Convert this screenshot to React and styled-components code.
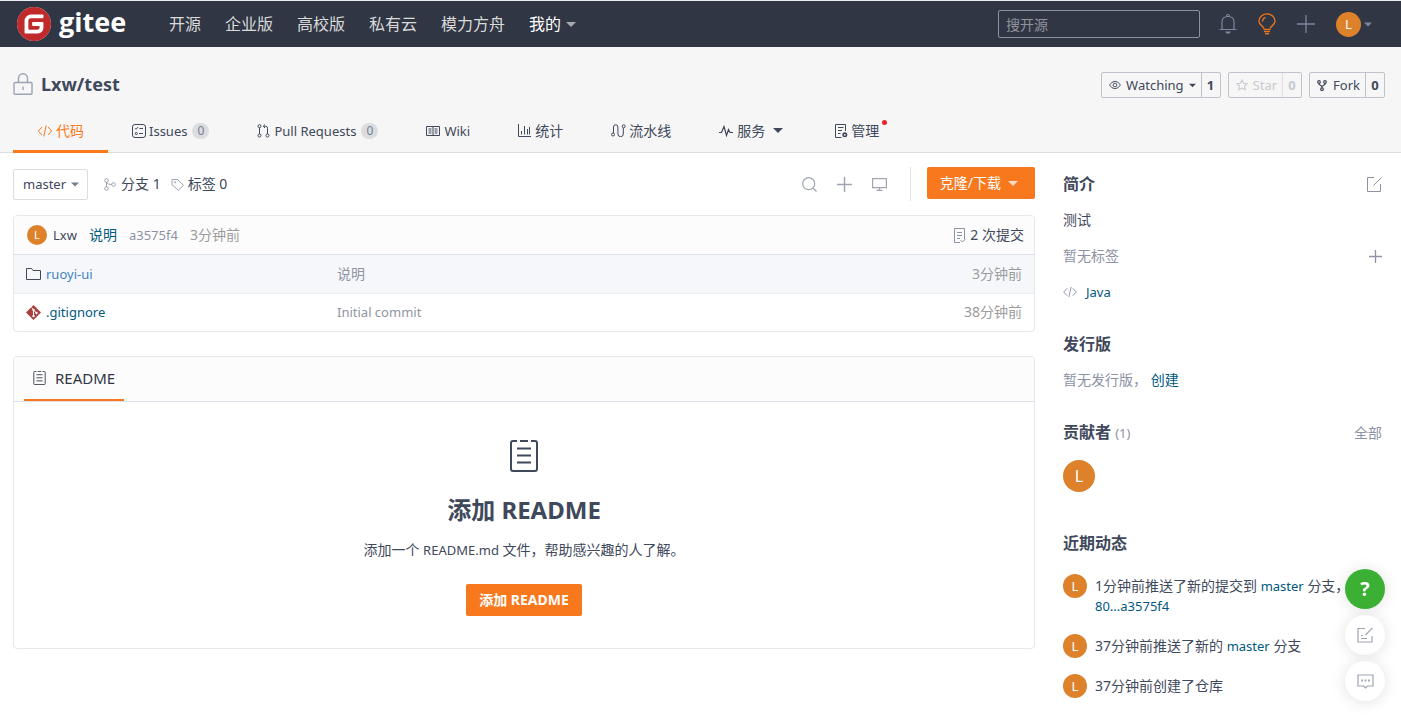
import React from 'react'
import styled, { createGlobalStyle } from 'styled-components'
import { SiGitee } from 'react-icons/si'

const GlobalStyle = createGlobalStyle`
  * {
    box-sizing: border-box;
  }

  body {
    margin: 0;
    background: #fff;
    color: #40485b;
    font-family: "Noto Sans", "Noto Sans CJK SC", sans-serif;
    font-size: 14px;
    line-height: 20px;
  }

  a {
    color: inherit;
    text-decoration: none;
  }

  button {
    padding: 0;
    border: 0;
    background: none;
    color: inherit;
    font: inherit;
    cursor: pointer;
  }

  h1, h2, h3, p, ul {
    margin: 0;
    padding: 0;
  }

  ul {
    list-style: none;
  }
`

/* ---------- icons ---------- */

const Svg = styled.svg`
  display: block;
  flex: none;
  fill: none;
  stroke: currentColor;
`

const Icon = ({ w = 14, h = w, box = `0 0 ${w} ${h}`, stroke = 1, children }) => (
  <Svg width={w} height={h} viewBox={box} strokeWidth={stroke} aria-hidden="true">
    {children}
  </Svg>
)

const Caret = ({ w = 10 }) => (
  <Icon w={w} h={5} box="0 0 10 5" stroke={0}>
    <path d="M0 0h10L5 5z" fill="currentColor" />
  </Icon>
)

const BellIcon = () => (
  <Icon w={18} h={22} stroke={1.2}>
    <path d="M3 16V9q0-5.500 6-5.500T15 9v7M.5 16.500h17M7.500 3.500q0-2 1.500-2t1.500 2" />
    <path d="M6 18.500h6q-1 2.300-3 2.300T6 18.500z" fill="currentColor" stroke="none" />
  </Icon>
)

const BulbIcon = () => (
  <Icon w={18} h={22} stroke={1.4}>
    <path d="M5.800 15.500c0-2.500-4.800-3.100-4.800-7.300a8 7.300 0 0 1 16 0c0 4.200-4.800 4.800-4.800 7.300M4.500 8.500c0-2 1-3.500 3-4.200M5.500 16.500h7M6 18.600h6M7 20.800h4" />
  </Icon>
)

const PlusIcon = ({ w = 14, stroke = 1 }) => (
  <Icon w={w} box="0 0 14 14" stroke={stroke}>
    <path d="M7 0v14M0 7h14" />
  </Icon>
)

const LockIcon = () => (
  <Icon w={20} h={22} stroke={1.4}>
    <rect x="1" y="9.500" width="18" height="11.800" rx="1" />
    <path d="M5.500 9.500V5.200a4.500 4.500 0 0 1 9 0v4.300M10 13.500v3.500" />
  </Icon>
)

const CodeIcon = ({ w = 15 }) => (
  <Icon w={w} h={12} box="0 0 15 12">
    <path d="M4.500 2L.8 6l3.700 4M10.500 2l3.700 4-3.700 4M8.700.5l-2.400 11" />
  </Icon>
)

const IssuesIcon = () => (
  <Icon>
    <rect x=".5" y=".5" width="13" height="13" rx="2.500" />
    <path d="M3 4.200l1 1L6.200 3M7.500 4.500H11M7 9.500h4" />
    <circle cx="4.300" cy="9.500" r="1.100" />
  </Icon>
)

const PullIcon = () => (
  <Icon w={14}>
    <circle cx="2.500" cy="2.200" r="1.500" />
    <circle cx="2.500" cy="11.500" r="1.500" />
    <circle cx="10.500" cy="11.500" r="1.500" />
    <path d="M2.500 3.700V10M10.500 10V4.200q0-2-2-2H6.500M8 .5L6.300 2.200 8 4" />
  </Icon>
)

const WikiIcon = () => (
  <Icon w={15} h={12}>
    <path d="M.5 1.500h13v9H.5zM7 1.500v9M2.500 4h3M2.500 6h3M2.500 8h3M8.500 4h3M8.500 6h3M8.500 8h3" />
  </Icon>
)

const StatsIcon = () => (
  <Icon w={14} h={13}>
    <path d="M.5 0v12.500H13M3.500 10.500V7M6.500 10.500V2M9.500 10.500V5M11.500 10.500V3" />
  </Icon>
)

const PipelineIcon = () => (
  <Icon w={15} h={13}>
    <circle cx="2" cy="10.500" r="1.500" />
    <circle cx="12.700" cy="2.300" r="1.500" />
    <path d="M2.500 9V3a2.200 2.200 0 0 1 4.400 0v7a2.700 2.700 0 0 0 5.400 0V4" />
  </Icon>
)

const PulseIcon = () => (
  <Icon w={15} h={12}>
    <path d="M0 7.500h2.500L5 1.500l2.500 9 2-6 1.500 3h3" strokeWidth="1.200" />
  </Icon>
)

const ManageIcon = () => (
  <Icon>
    <path d="M7.500 13.500h-6V.5h10V7M4 3.500h5.500M4 6.500h4M4 9.500h2.500" />
    <circle cx="10.800" cy="10.800" r="1.700" strokeWidth="1.600" />
  </Icon>
)

const EyeIcon = () => (
  <Icon w={12} h={10} box="0 0 13 10">
    <path d="M.6 5Q3 1 6.500 1t5.900 4Q10 9 6.500 9T.6 5z" />
    <circle cx="6.500" cy="5" r="2" />
  </Icon>
)

const StarIcon = () => (
  <Icon w={12} box="0 0 13 13" stroke={1.2}>
    <path d="M6.500 1l1.700 3.600 3.900.5-2.900 2.700.8 3.900-3.500-1.900L3 11.700l.8-3.900L.9 5.100l3.900-.5z" />
  </Icon>
)

const ForkIcon = () => (
  <Icon w={11} stroke={1.2}>
    <circle cx="2" cy="2" r="1.300" />
    <circle cx="8" cy="2" r="1.300" />
    <circle cx="5" cy="9.200" r="1.300" />
    <path d="M2 3.300v1L5 6.500l3-2.200v-1M5 6.500V8" />
  </Icon>
)

const BranchIcon = () => (
  <Icon w={13}>
    <circle cx="2.500" cy="2.500" r="1.800" />
    <circle cx="2.500" cy="10.500" r="1.800" />
    <circle cx="9.500" cy="6.500" r="1.800" />
    <path d="M2.500 4.300v4.400M2.500 4.500q1 2 5.200 2" />
  </Icon>
)

const TagIcon = () => (
  <Icon w={13}>
    <path d="M1 1.500h5.500l6 5.800-5.200 5L1 6.800z" />
    <circle cx="4" cy="4.300" r=".7" />
  </Icon>
)

const SearchIcon = () => (
  <Icon w={15} stroke={1.2}>
    <circle cx="6.700" cy="6.700" r="6" />
    <path d="M11 11l3.500 3.500" />
  </Icon>
)

const MonitorIcon = () => (
  <Icon w={15} h={13} stroke={1.2}>
    <path d="M.6.6h13.800v9H.6zM7.500 9.500v2.500M4.500 12.300h6" />
  </Icon>
)

const CommitsIcon = () => (
  <Icon w={13} h={15}>
    <path d="M7 14.500H1.500V.5h10V11M4 4.500h5M4 7.500h5M4 10.500h3M7.500 12l2 2 3-3" />
  </Icon>
)

const FolderIcon = () => (
  <Icon w={15} h={12}>
    <path d="M.5 11.500V.5h5l1.500 2h7.500v9z" />
  </Icon>
)

const GitIcon = () => (
  <Icon w={15} stroke={0}>
    <path d="M7.500 0L15 7.500 7.500 15 0 7.500z" fill="#a8403d" />
    <path d="M5.500 2.500l2 2.200v6.300M7.500 5l3 3" stroke="#fff" strokeWidth="1" />
    <circle cx="7.500" cy="5" r="1.200" fill="#fff" />
    <circle cx="7.500" cy="11" r="1.200" fill="#fff" />
    <circle cx="10.500" cy="8" r="1.200" fill="#fff" />
  </Icon>
)

const DocIcon = ({ w = 13, h = 14, stroke = 2 }) => (
  <Icon w={w} h={h} box="0 0 28 32" stroke={stroke}>
    <path d="M7 1H3Q1 1 1 3v26q0 2 2 2h22q2 0 2-2V3q0-2-2-2h-4M10 1h8M7 8.500h14M7 15.500h14M7 22.500h14" />
  </Icon>
)

const EditIcon = () => (
  <Icon w={15}>
    <path d="M7 .5H.5v14h13V7M6.500 8.500l8-8" />
  </Icon>
)

const NoteIcon = () => (
  <Icon w={16} stroke={1.2}>
    <path d="M8 1.500H1v13.500h14V9M8.500 8L15.500.8M4 8.500h2M4 11.500h6" />
  </Icon>
)

const ChatIcon = () => (
  <Icon w={17} h={15} stroke={1.2}>
    <path d="M1 1h15v11H10.500l-2 2-2-2H1z" />
    <path d="M4.200 6.500H6M7.600 6.500h1.800M11 6.500h1.800" strokeWidth="1.800" />
  </Icon>
)

/* ---------- shared parts ---------- */

const Latin = styled.span`
  font-size: 13px;
`

const Link = styled.a`
  color: ${p => p.$color || '#005980'};
  font-size: ${p => (p.$latin ? '13px' : 'inherit')};
`

const Avatar = styled.span`
  display: inline-flex;
  flex: none;
  align-items: center;
  justify-content: center;
  width: ${p => p.$size}px;
  height: ${p => p.$size}px;
  border-radius: 50%;
  background: #dd812b;
  color: #fff;
  font-size: ${p => (p.$size > 30 ? 16 : p.$size > 20 ? 13 : 11)}px;
`

/* ---------- top bar ---------- */

const TopBar = styled.header`
  display: flex;
  align-items: center;
  height: 47px;
  padding: 0 29px 0 17px;
  border-top: 1px solid #e9eef0;
  background: #303643;
  color: #dadada;
`

const Brand = styled.a`
  display: flex;
  align-items: center;
  gap: 8px;
  width: 152px;
  color: #fff;
  font: bold 27px/34px "Open Sans", sans-serif;
`

const Mark = styled.span`
  display: flex;
  border-radius: 50%;
  background: #fff;
  color: #c02a2b;
`

const BrandName = styled.span`
  padding-bottom: 4px;
`

const TopNav = styled.nav`
  display: flex;
  flex: 1;
  gap: 24px;
  font-size: 16px;
  line-height: 24px;
`

const TopLink = styled.a`
  display: flex;
  align-items: center;
  gap: 5px;
  color: ${p => (p.$active ? '#fff' : '#dadada')};

  svg {
    color: #a6a9b0;
  }
`

const Search = styled.input`
  width: 202px;
  height: 28px;
  padding: 0 7px;
  border: 1px solid #8c92a4;
  border-radius: 2px;
  background: transparent;
  color: #fff;
  font: inherit;

  &::placeholder {
    color: #8f949e;
    opacity: 1;
  }
`

const TopTools = styled.div`
  display: flex;
  align-items: center;
  gap: 21px;
  margin-left: 19px;
  color: #7c86a0;
`

const ToolButton = styled.button`
  display: flex;
  align-items: center;
  gap: 3px;
  color: ${p => p.$color || 'inherit'};
`

/* ---------- repository header ---------- */

const RepoHeader = styled.section`
  padding: 24px 16px 0 13px;
  border-bottom: 1px solid #dedede;
  background: #f6f6f6;
`

const TitleRow = styled.div`
  display: flex;
  align-items: flex-end;
  justify-content: space-between;
  height: 27px;
`

const Title = styled.h1`
  display: flex;
  align-items: center;
  align-self: flex-start;
  gap: 8px;
  font-size: 18px;
  line-height: 26px;

  svg {
    color: #9da3b4;
  }
`

const Actions = styled.div`
  display: flex;
  gap: 7px;
`

const Action = styled.div`
  display: flex;
  height: 26px;
  border: 1px solid #c0c3cc;
  border-radius: 2px;
  color: ${p => (p.$disabled ? '#c8cacf' : '#40485b')};
  font-size: 13px;
  line-height: 24px;
`

const ActionButton = styled.button`
  display: flex;
  align-items: center;
  gap: 5px;
  padding: 0 5px 0 7px;
`

const ActionCount = styled.a`
  min-width: 19px;
  border-left: 1px solid ${p => (p.$disabled ? '#dfe0e4' : '#c0c3cc')};
  font-weight: bold;
  text-align: center;
`

const Tabs = styled.nav`
  display: flex;
  margin: 11px 0 -1px;
`

const Tab = styled.a`
  display: flex;
  align-items: center;
  gap: 3px;
  height: 44px;
  padding: 2px 24px 0;
  border-bottom: 3px solid ${p => (p.$active ? '#fa7a1b' : 'transparent')};
  color: ${p => (p.$active ? '#fa7a1b' : '#40485b')};
  font-size: ${p => (p.$latin ? 13 : 14)}px;
`

const TabCaret = styled.span`
  margin: 0 3px 0 5px;
`

const Badge = styled.span`
  min-width: 17px;
  height: 16px;
  margin-left: 2px;
  border-radius: 8px;
  background: #dcdde0;
  color: #757d92;
  font-size: 12px;
  line-height: 16px;
  text-align: center;
`

const Dot = styled.span`
  align-self: flex-start;
  width: 5px;
  height: 5px;
  margin-top: 9px;
  border-radius: 50%;
  background: #e8232b;
`

/* ---------- content ---------- */

const Page = styled.div`
  display: grid;
  grid-template-columns: minmax(0, 1fr) 319px;
  gap: 28px;
  padding: 14px 19px 16px 13px;
`

const Toolbar = styled.div`
  display: flex;
  align-items: center;
  height: 34px;
  margin-bottom: 14px;
`

const SelectWrap = styled.label`
  position: relative;
  display: flex;
  align-items: center;
  margin-right: 16px;

  svg {
    position: absolute;
    right: 9px;
    color: #757d92;
    pointer-events: none;
  }
`

const BranchSelect = styled.select`
  appearance: none;
  width: 75px;
  height: 31px;
  padding: 0 9px;
  border: 1px solid #dcdde3;
  border-radius: 2px;
  background: #fff;
  color: #40485b;
  font: inherit;
  font-size: 13px;
`

const RefLink = styled.a`
  display: flex;
  align-items: center;
  gap: 4px;
  margin-right: 10px;

  svg {
    color: #9da3b4;
  }
`

const ToolbarIcons = styled.div`
  display: flex;
  align-items: center;
  gap: 20px;
  height: 34px;
  margin-left: auto;
  padding-right: 23px;
  border-right: 1px solid #dfe3ea;
  color: #a0a4b3;
`

const PrimaryButton = styled.button`
  display: inline-flex;
  align-items: center;
  justify-content: center;
  gap: 7px;
  height: 32px;
  padding: 0 ${p => (p.$menu ? 17 : 13)}px 0 13px;
  border-radius: 2px;
  background: #f7781d;
  color: #fff;
  font-weight: ${p => (p.$menu ? 'normal' : 'bold')};

  svg {
    color: #fcdcc4;
  }
`

const CloneSlot = styled.div`
  align-self: flex-start;
  margin-left: 16px;
`

const Panel = styled.section`
  overflow: hidden;
  margin-bottom: 24px;
  border: 1px solid #e3e9ed;
  border-radius: 4px;
`

const CommitBar = styled.div`
  display: flex;
  align-items: center;
  gap: 12px;
  height: 39px;
  padding: 0 10px 0 13px;
  border-bottom: 1px solid #dfe4ea;
  background: #fcfcfc;
`

const Author = styled.a`
  display: flex;
  align-items: center;
  gap: 6px;
  font-size: 13px;
`

const CommitCount = styled.a`
  display: flex;
  align-items: center;
  gap: 4px;
  margin-left: auto;

  svg {
    color: #8c92a4;
  }
`

const FileTable = styled.table`
  width: 100%;
  border-collapse: collapse;
  table-layout: fixed;

  tr {
    height: 38px;
  }

  tr:first-child {
    border-bottom: 1px solid #e9edf2;
    background: #f5f7fb;
  }

  td {
    padding: 0 12px 0 0;
    color: #9095a1;
  }

  td:first-child {
    width: 323px;
    padding-left: 12px;
  }

  td:last-child {
    width: 160px;
    color: #9b9b9b;
    text-align: right;
  }
`

const FileName = styled.a`
  display: flex;
  align-items: center;
  gap: 5px;
  color: ${p => (p.$hover ? '#4183c4' : '#005980')};
  font-size: 13px;

  svg {
    color: #40485b;
  }
`

const ReadmeTabs = styled.div`
  display: flex;
  height: 45px;
  padding-left: 10px;
  border-bottom: 1px solid #dfe1e8;
  background: #fcfcfc;
`

const ReadmeTab = styled.a`
  display: flex;
  align-items: center;
  gap: 9px;
  padding: 0 9px 0 9px;
  border-bottom: 2px solid #f7781d;
  color: #303643;
  font-size: 15px;
`

const ReadmeEmpty = styled.div`
  display: flex;
  flex-direction: column;
  align-items: center;
  padding: 38px 16px 32px;
  text-align: center;

  h2 {
    margin: 20px 0 12px;
    font-size: 24px;
    line-height: 36px;
  }

  p {
    margin-bottom: 24px;
  }
`

/* ---------- sidebar ---------- */

const Sidebar = styled.aside`
  padding-top: 5px;
`

const Block = styled.section`
  margin-bottom: 30px;
`

const BlockTitle = styled.div`
  display: flex;
  align-items: center;
  justify-content: space-between;
  margin-bottom: 14px;
  color: #8c92a4;

  h3 {
    color: #40485b;
    font-size: 16px;
    line-height: 24px;
  }

  small {
    font-size: 13px;
    font-weight: normal;
    color: #8c92a4;
  }
`

const Line = styled.div`
  display: flex;
  align-items: center;
  gap: 9px;
  margin-bottom: 16px;
  color: ${p => (p.$muted ? '#8c92a4' : 'inherit')};

  &:last-child {
    margin-bottom: 0;
  }

  button {
    margin-left: auto;
  }
`

const Contributors = styled.div`
  display: flex;
  height: 42px;
  padding-top: 1px;
`

const Feed = styled.ul`
  display: grid;
  gap: 20px;
  padding-top: 7px;
`

const FeedItem = styled.li`
  display: flex;
  align-items: flex-start;
  gap: 8px;

  > span {
    margin: -2px 0;
  }
`

const Floating = styled.div`
  position: fixed;
  right: 16px;
  bottom: 19px;
  display: grid;
  gap: 6px;
`

const RoundButton = styled.button`
  display: flex;
  align-items: center;
  justify-content: center;
  width: 40px;
  height: 40px;
  border-radius: 50%;
  background: ${p => (p.$help ? '#3bb034' : '#fff')};
  box-shadow: 0 1px 16px rgba(0, 0, 0, 0.12);
  color: ${p => (p.$help ? '#fff' : '#9da3b4')};
  font-size: 20px;
  font-weight: bold;
`

const topLinks = ['开源', '企业版', '高校版', '私有云', '模力方舟']

const tabs = [
  { label: '代码', icon: <CodeIcon w={16} />, active: true },
  { label: 'Issues', icon: <IssuesIcon />, latin: true, count: 0 },
  { label: 'Pull Requests', icon: <PullIcon />, latin: true, count: 0 },
  { label: 'Wiki', icon: <WikiIcon />, latin: true },
  { label: '统计', icon: <StatsIcon /> },
  { label: '流水线', icon: <PipelineIcon /> },
  { label: '服务', icon: <PulseIcon />, menu: true },
  { label: '管理', icon: <ManageIcon />, dot: true }
]

const files = [
  { name: 'ruoyi-ui', icon: <FolderIcon />, message: '说明', time: '3分钟前', hover: true },
  { name: '.gitignore', icon: <GitIcon />, message: <Latin>Initial commit</Latin>, time: '38分钟前' }
]

const Header = () => (
  <TopBar>
    <Brand href="#">
      <Mark>
        <SiGitee size={34} />
      </Mark>
      <BrandName>gitee</BrandName>
    </Brand>
    <TopNav>
      {topLinks.map(label => (
        <TopLink key={label} href="#">
          {label}
        </TopLink>
      ))}
      <TopLink href="#" $active>
        我的 <Caret />
      </TopLink>
    </TopNav>
    <Search type="search" placeholder="搜开源" aria-label="搜开源" />
    <TopTools>
      <ToolButton aria-label="通知">
        <BellIcon />
      </ToolButton>
      <ToolButton aria-label="提示" $color="#e8741e">
        <BulbIcon />
      </ToolButton>
      <ToolButton aria-label="新建">
        <PlusIcon w={18} />
      </ToolButton>
      <ToolButton aria-label="账户">
        <Avatar $size={25}>L</Avatar>
        <Caret w={8} />
      </ToolButton>
    </TopTools>
  </TopBar>
)

const Repo = () => (
  <RepoHeader>
    <TitleRow>
      <Title>
        <LockIcon />
        <a href="#">Lxw/test</a>
      </Title>
      <Actions>
        <Action>
          <ActionButton>
            <EyeIcon /> Watching <Caret w={7} />
          </ActionButton>
          <ActionCount href="#">1</ActionCount>
        </Action>
        <Action $disabled>
          <ActionButton disabled>
            <StarIcon /> Star
          </ActionButton>
          <ActionCount href="#" $disabled>
            0
          </ActionCount>
        </Action>
        <Action>
          <ActionButton>
            <ForkIcon /> Fork
          </ActionButton>
          <ActionCount href="#">0</ActionCount>
        </Action>
      </Actions>
    </TitleRow>
    <Tabs>
      {tabs.map(tab => (
        <Tab key={tab.label} href="#" $active={tab.active} $latin={tab.latin}>
          {tab.icon}
          {tab.label}
          {tab.count !== undefined && <Badge>{tab.count}</Badge>}
          {tab.menu && (
            <TabCaret>
              <Caret />
            </TabCaret>
          )}
          {tab.dot && <Dot />}
        </Tab>
      ))}
    </Tabs>
  </RepoHeader>
)

const Files = () => (
  <Panel>
    <CommitBar>
      <Author href="#">
        <Avatar $size={20}>L</Avatar>
        Lxw
      </Author>
      <Link href="#">说明</Link>
      <Link href="#" $latin $color="#8c92a4">
        a3575f4
      </Link>
      <Link as="span" $color="#9b9b9b">
        3分钟前
      </Link>
      <CommitCount href="#">
        <CommitsIcon />2 次提交
      </CommitCount>
    </CommitBar>
    <FileTable>
      <tbody>
        {files.map(file => (
          <tr key={file.name}>
            <td>
              <FileName href="#" $hover={file.hover}>
                {file.icon}
                {file.name}
              </FileName>
            </td>
            <td>{file.message}</td>
            <td>{file.time}</td>
          </tr>
        ))}
      </tbody>
    </FileTable>
  </Panel>
)

const Readme = () => (
  <Panel>
    <ReadmeTabs>
      <ReadmeTab href="#">
        <DocIcon />
        README
      </ReadmeTab>
    </ReadmeTabs>
    <ReadmeEmpty>
      <DocIcon w={28} h={32} />
      <h2>添加 README</h2>
      <p>
        添加一个 <Latin>README.md</Latin> 文件，帮助感兴趣的人了解。
      </p>
      <PrimaryButton>添加 README</PrimaryButton>
    </ReadmeEmpty>
  </Panel>
)

const Side = () => (
  <Sidebar>
    <Block>
      <BlockTitle>
        <h3>简介</h3>
        <button aria-label="编辑">
          <EditIcon />
        </button>
      </BlockTitle>
      <Line>测试</Line>
      <Line $muted>
        暂无标签
        <button aria-label="添加标签">
          <PlusIcon w={13} stroke={1.4} />
        </button>
      </Line>
      <Line $muted>
        <CodeIcon w={14} />
        <Link href="#" $latin>
          Java
        </Link>
      </Line>
    </Block>
    <Block>
      <BlockTitle>
        <h3>发行版</h3>
      </BlockTitle>
      <Line $muted>
        <span>
          暂无发行版， <Link href="#">创建</Link>
        </span>
      </Line>
    </Block>
    <Block>
      <BlockTitle>
        <h3>
          贡献者 <small>(1)</small>
        </h3>
        <a href="#">全部</a>
      </BlockTitle>
      <Contributors>
        <Avatar $size={32}>L</Avatar>
      </Contributors>
    </Block>
    <Block>
      <BlockTitle>
        <h3>近期动态</h3>
      </BlockTitle>
      <Feed>
        <FeedItem>
          <Avatar $size={24}>L</Avatar>
          <p>
            1分钟前推送了新的提交到{' '}
            <Link href="#" $latin>
              master
            </Link>{' '}
            分支，
            <Link href="#" $latin>
              80...a3575f4
            </Link>
          </p>
        </FeedItem>
        <FeedItem>
          <Avatar $size={24}>L</Avatar>
          <p>
            37分钟前推送了新的{' '}
            <Link href="#" $latin>
              master
            </Link>{' '}
            分支
          </p>
        </FeedItem>
        <FeedItem>
          <Avatar $size={24}>L</Avatar>
          <p>37分钟前创建了仓库</p>
        </FeedItem>
      </Feed>
    </Block>
  </Sidebar>
)

const App = () => (
  <>
    <GlobalStyle />
    <Header />
    <Repo />
    <Page>
      <main>
        <Toolbar>
          <SelectWrap>
            <BranchSelect aria-label="分支">
              <option>master</option>
            </BranchSelect>
            <Caret w={8} />
          </SelectWrap>
          <RefLink href="#">
            <BranchIcon />
            分支 1
          </RefLink>
          <RefLink href="#">
            <TagIcon />
            标签 0
          </RefLink>
          <ToolbarIcons>
            <ToolButton aria-label="搜索">
              <SearchIcon />
            </ToolButton>
            <ToolButton aria-label="添加文件">
              <PlusIcon w={15} stroke={1.4} />
            </ToolButton>
            <ToolButton aria-label="Web IDE">
              <MonitorIcon />
            </ToolButton>
          </ToolbarIcons>
          <CloneSlot>
            <PrimaryButton $menu>
              克隆/下载 <Caret />
            </PrimaryButton>
          </CloneSlot>
        </Toolbar>
        <Files />
        <Readme />
      </main>
      <Side />
    </Page>
    <Floating>
      <RoundButton $help aria-label="帮助">
        ?
      </RoundButton>
      <RoundButton aria-label="反馈">
        <NoteIcon />
      </RoundButton>
      <RoundButton aria-label="评论">
        <ChatIcon />
      </RoundButton>
    </Floating>
  </>
)

export default App
